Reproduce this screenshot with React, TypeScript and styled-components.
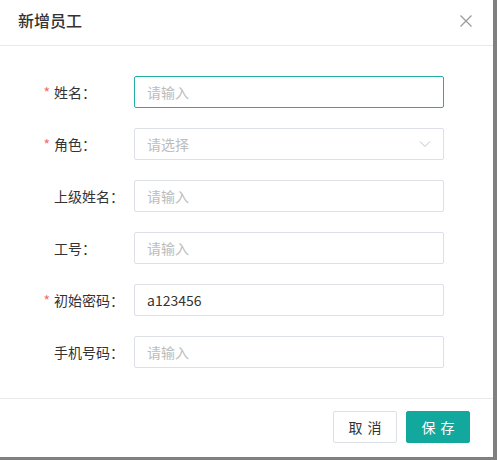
import React from 'react';
import styled, { createGlobalStyle } from 'styled-components';

const GlobalStyle = createGlobalStyle`
  html, body {
    margin: 0;
    padding: 0;
    background: #808080;
    font-family: "Noto Sans CJK SC", "Noto Sans", sans-serif;
  }
`;

const Dialog = styled.div`
  width: 493px;
  height: 457px;
  background: #fff;
  display: flex;
  flex-direction: column;
  box-sizing: border-box;
`;

const Header = styled.div`
  height: 46px;
  display: flex;
  align-items: center;
  justify-content: space-between;
  padding: 0 20px 0 18px;
  border-bottom: 1px solid #e9e9e9;
  box-sizing: border-box;
`;

const Title = styled.div`
  font-size: 16px;
  color: #333;
  font-weight: 500;
  margin-top: -5px;
`;

const Close = styled.button`
  border: none;
  background: none;
  padding: 0;
  width: 14px;
  height: 14px;
  display: flex;
  margin-top: -3px;
`;

const Body = styled.div`
  flex: 1;
  padding: 30px 0 0;
  display: flex;
  flex-direction: column;
  gap: 20px;
`;

const Row = styled.div`
  display: flex;
  align-items: center;
  height: 32px;
`;

const Label = styled.label`
  width: 80px;
  margin-left: 54px;
  font-size: 14px;
  color: #333;
  flex-shrink: 0;
  position: relative;
`;

const Star = styled.span`
  position: absolute;
  right: 100%;
  margin-right: 4px;
  top: 0;
  color: #f56c6c;
`;

const Field = styled.div<{ $focus?: boolean }>`
  width: 310px;
  height: 32px;
  box-sizing: border-box;
  border: 1px solid ${p => (p.$focus ? '#1fb0a2' : '#dcdfe6')};
  border-radius: 2px;
  display: flex;
  align-items: center;
  padding: 0 12px;
  font-size: 14px;
`;

const Input = styled.input`
  border: none;
  outline: none;
  width: 100%;
  padding: 0;
  font-size: 14px;
  font-family: inherit;
  color: #333;
  background: transparent;
  &::placeholder {
    color: #bcbcbc;
  }
`;

const Arrow = styled.svg`
  flex-shrink: 0;
`;

const Footer = styled.div`
  height: 59px;
  border-top: 1px solid #e9e9e9;
  display: flex;
  align-items: center;
  justify-content: flex-end;
  gap: 9px;
  padding: 0 23px 2px 0;
  box-sizing: border-box;
`;

const Button = styled.button<{ $primary?: boolean }>`
  width: 64px;
  height: 32px;
  box-sizing: border-box;
  border-radius: 2px;
  font-size: 14px;
  font-family: inherit;
  letter-spacing: 5px;
  text-indent: 5px;
  padding: 0;
  border: 1px solid ${p => (p.$primary ? '#13a89e' : '#dcdfe6')};
  background: ${p => (p.$primary ? '#13a89e' : '#fff')};
  color: ${p => (p.$primary ? '#fff' : '#333')};
`;

const rows = [
  { label: '姓名：', required: true, placeholder: '请输入', focus: true },
  { label: '角色：', required: true, placeholder: '请选择', select: true },
  { label: '上级姓名：', placeholder: '请输入' },
  { label: '工号：', placeholder: '请输入' },
  { label: '初始密码：', required: true, value: 'a123456' },
  { label: '手机号码：', placeholder: '请输入' },
];

export default function App() {
  return (
    <>
      <GlobalStyle />
      <Dialog>
        <Header>
          <Title>新增员工</Title>
          <Close>
            <svg width="14" height="14" viewBox="0 0 14 14">
              <path d="M1.5 1.5 L12.5 12.5 M12.5 1.5 L1.5 12.5" stroke="#999" strokeWidth="1.2" fill="none" />
            </svg>
          </Close>
        </Header>
        <Body>
          {rows.map(r => (
            <Row key={r.label}>
              <Label>
                {r.required && <Star>*</Star>}
                {r.label}
              </Label>
              <Field $focus={r.focus}>
                <Input placeholder={r.placeholder} defaultValue={r.value} readOnly={r.select} />
                {r.select && (
                  <Arrow width="12" height="8" viewBox="0 0 12 8">
                    <path d="M1 1.5 L6 6.5 L11 1.5" stroke="#c0c4cc" strokeWidth="1" fill="none" />
                  </Arrow>
                )}
              </Field>
            </Row>
          ))}
        </Body>
        <Footer>
          <Button>取消</Button>
          <Button $primary>保存</Button>
        </Footer>
      </Dialog>
    </>
  );
}
